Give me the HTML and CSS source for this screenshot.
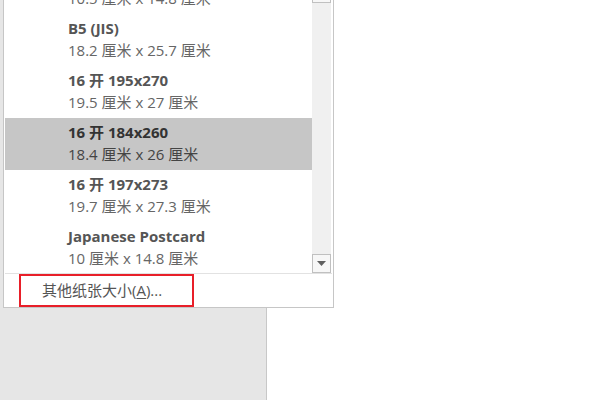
FILE: index.html
```html
<!DOCTYPE html>
<html lang="zh">
<head>
<meta charset="utf-8">
<link rel="stylesheet" href="styles.css">
</head>
<body>
<div class="page">
  <div class="side"></div>
  <div class="main"></div>
</div>
<div class="menu">
  <div class="body">
    <div class="list">
      <div class="items">
        <div class="item"><div class="t">A6</div><div class="s">10.5 厘米 x 14.8 厘米</div></div>
        <div class="item"><div class="t">B5 (JIS)</div><div class="s">18.2 厘米 x 25.7 厘米</div></div>
        <div class="item"><div class="t">16 开 195x270</div><div class="s">19.5 厘米 x 27 厘米</div></div>
        <div class="item sel"><div class="t">16 开 184x260</div><div class="s">18.4 厘米 x 26 厘米</div></div>
        <div class="item"><div class="t">16 开 197x273</div><div class="s">19.7 厘米 x 27.3 厘米</div></div>
        <div class="item"><div class="t">Japanese Postcard</div><div class="s">10 厘米 x 14.8 厘米</div></div>
      </div>
    </div>
    <div class="scroll">
      <div class="btn up"></div>
      <div class="track"></div>
      <div class="btn down"><svg width="9" height="5" viewBox="0 0 9 5"><path d="M0 0h9L4.5 5z" fill="#606060"/></svg></div>
    </div>
  </div>
  <div class="footer">
    <div class="more">其他纸张大小(<u>A</u>)...</div>
  </div>
</div>
</body>
</html>
```
FILE: styles.css
```css
html, body {
  margin: 0;
  padding: 0;
  width: 600px;
  height: 400px;
  overflow: hidden;
  background: #fff;
  font-family: "Open Sans", "Noto Sans CJK SC", sans-serif;
}
.page {
  display: flex;
  height: 400px;
}
.side {
  width: 266px;
  background: #e6e6e6;
  border-right: 1px solid #c8c8c8;
}
.main {
  flex: 1;
  background: #fff;
}
.menu {
  position: absolute;
  left: 3px;
  top: 0;
  width: 329px;
  height: 307px;
  background: #fff;
  border: 1px solid #c6c6c6;
  border-top: none;
  display: flex;
  flex-direction: column;
}
.body {
  display: flex;
  height: 273px;
  padding-left: 1px;
}
.list {
  width: 307px;
  overflow: hidden;
  position: relative;
}
.items {
  margin-top: -38px;
}
.item {
  height: 52px;
  box-sizing: border-box;
  padding: 4px 0 0 63px;
}
.item .t {
  font-weight: 700;
  font-size: 15px;
  line-height: 21px;
  color: #555;
}
.item .s {
  font-size: 15px;
  line-height: 22px;
  color: #666;
}
.item.sel {
  background: #c6c6c6;
}
.item.sel .t { color: #333; }
.item.sel .s { color: #444; }
.scroll {
  width: 19px;
  background: #f0f0f0;
  display: flex;
  flex-direction: column;
}
.btn {
  width: 19px;
  height: 19px;
  box-sizing: border-box;
  border: 1px solid #c0c0c0;
  background: #f7f7f7;
  display: flex;
  align-items: center;
  justify-content: center;
}
.btn.up {
  height: 3px;
  border-top: none;
}
.track {
  flex: 1;
}
.footer {
  border-top: 1px solid #e2e2e2;
  margin: 0 1px 0 1px;
  height: 33px;
  display: flex;
}
.more {
  margin-left: 14px;
  width: 175px;
  height: 33px;
  box-sizing: border-box;
  border: 2px solid #e81f29;
  padding-left: 21px;
  font-size: 15px;
  line-height: 29px;
  color: #555;
}
.more u {
  text-decoration: underline;
  text-underline-offset: 2px;
}
```
